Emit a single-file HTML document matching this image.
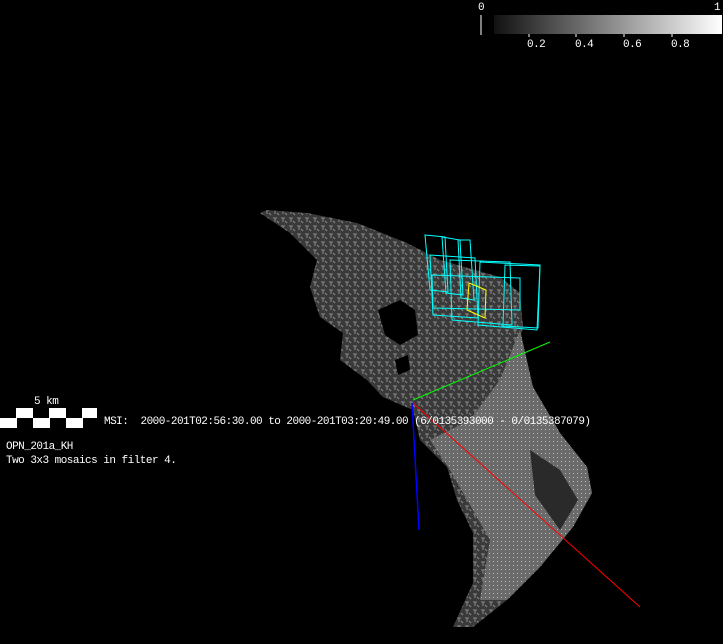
<!DOCTYPE html>
<html><head><meta charset="utf-8"><style>
html,body{margin:0;padding:0;background:#000;width:723px;height:644px;overflow:hidden}
.t{position:absolute;color:#fff;font-family:"Liberation Mono",monospace;font-size:11px;line-height:12px;white-space:pre;letter-spacing:-0.52px}
</style></head><body>
<svg width="723" height="644" style="position:absolute;left:0;top:0">
<defs><pattern id="p" width="8" height="8" patternUnits="userSpaceOnUse"><rect width="8" height="8" fill="#3a3a3a"/><path d="M1 2h4M3 2v4M5 5l2 2" stroke="#8a8a8a" stroke-width="1"/></pattern>
<pattern id="q" width="4" height="4" patternUnits="userSpaceOnUse"><rect width="4" height="4" fill="#6a6a6a"/><rect x="1" y="1" width="1" height="1" fill="#bbb"/></pattern></defs>
<polygon fill="url(#p)" points="267,210 307,213 357,223 407,243 440,260 500,277 520,293 523,327 517,353 533,387 560,433 587,467 592,493 573,527 540,567 507,600 473,627 453,627 473,583 473,533 457,500 447,467 420,440 413,410 383,397 367,380 340,360 343,333 320,317 310,287 317,260 290,233 260,213"/>
<polygon fill="url(#q)" points="520,330 533,387 560,433 587,467 592,493 573,527 540,567 507,600 480,600 490,540 450,470 430,440 470,420 500,380"/>
<polygon fill="#2a2a2a" points="530,450 560,470 578,500 560,530 535,495"/>
<polygon fill="#000" points="378,310 400,300 415,310 418,335 400,345 385,335"/>
<polygon fill="#000" points="395,360 408,355 410,370 398,375"/>
<g fill="none" stroke="#0ff" stroke-width="1">
<polygon points="425,235 445,237 448,292 430,290"/><polygon points="442,237 460,240 463,295 446,293"/>
<polygon points="458,240 470,240 474,300 461,298"/><polygon points="430,255 475,258 478,318 433,315"/>
<polygon points="450,260 510,262 512,325 452,320"/><polygon points="480,262 540,265 537,330 478,325"/>
<polygon points="505,265 540,266 538,328 503,326"/><polygon points="432,275 520,278 520,310 433,308"/>
</g>
<polygon points="469,283 486,290 485,318 467,310" fill="none" stroke="#ff0" stroke-width="1"/>
<line x1="413" y1="400" x2="550" y2="342" stroke="#0f0"/>
<line x1="413" y1="403" x2="640" y2="607" stroke="#f00"/>
<line x1="412" y1="403" x2="419" y2="530" stroke="#00f" stroke-width="1.5"/>
<rect x="0" y="408" width="97" height="20" fill="#fff"/>
<g fill="#000"><rect x="0" y="408" width="16" height="10"/><rect x="33" y="408" width="16" height="10"/><rect x="66" y="408" width="16" height="10"/>
<rect x="17" y="418" width="16" height="10"/><rect x="50" y="418" width="16" height="10"/><rect x="83" y="418" width="14" height="10"/></g>
<line x1="481" y1="15" x2="481" y2="35" stroke="#fff"/>
<g stroke="#fff"><line x1="529" y1="33" x2="529" y2="37"/><line x1="576" y1="33" x2="576" y2="37"/><line x1="624" y1="33" x2="624" y2="37"/><line x1="672" y1="33" x2="672" y2="37"/></g>
</svg>
<div style="position:absolute;left:494px;top:15px;width:228px;height:19px;background:linear-gradient(to right,#111,#fff)"></div>
<div class="t" style="left:478px;top:2px">0</div>
<div class="t" style="left:714px;top:2px">1</div>
<div class="t" style="left:527px;top:39px">0.2</div>
<div class="t" style="left:575px;top:39px">0.4</div>
<div class="t" style="left:623px;top:39px">0.6</div>
<div class="t" style="left:671px;top:39px">0.8</div>
<div class="t" style="left:34px;top:396px">5 km</div>
<div class="t" style="left:104px;top:416px">MSI:  2000-201T02:56:30.00 to 2000-201T03:20:49.00 (6/0135393000 - 0/0135387079)</div>
<div class="t" style="left:6px;top:441px">OPN_201a_KH</div>
<div class="t" style="left:6px;top:455px">Two 3x3 mosaics in filter 4.</div>
</body></html>
